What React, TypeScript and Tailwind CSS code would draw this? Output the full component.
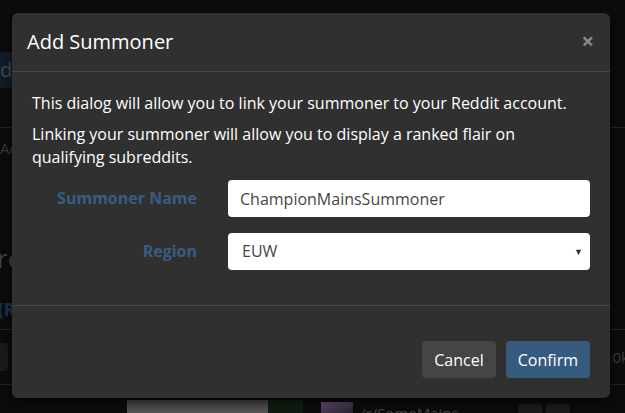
import React, { useState } from 'react'

const font = { fontFamily: '"Open Sans", "Liberation Sans", sans-serif' }

function Backdrop() {
  // the page behind the modal, already darkened by the overlay
  return (
    <div className="absolute inset-0 flex flex-col bg-[#0b0b0b] overflow-hidden">
      <div className="h-[52px] shrink-0" />
      <div className="flex h-[36px] shrink-0">
        <div className="w-[40px] bg-[#111c27] text-[#3a4a5a] text-[20px] leading-[36px]">d</div>
      </div>
      <div className="h-[40px] shrink-0 border-b border-[#222222]" />
      <div className="h-[40px] shrink-0 text-[15px] leading-[40px] text-[#3b3b3b]">Ac</div>
      <div className="h-[72px] shrink-0" />
      <div className="h-[36px] shrink-0 text-[26px] leading-[36px] text-[#3f3f3f] -ml-[3px]">re</div>
      <div className="h-[22px] shrink-0" />
      <div className="h-[32px] shrink-0 text-[17px] leading-[24px] font-bold text-[#1c3147] border-b border-[#222222] -ml-[2px]">(R</div>
      <div className="flex items-center justify-between h-[55px] shrink-0 border-b border-[#222222]">
        <div className="w-[8px] h-[28px] rounded-r bg-[#1a1a1a]" />
        <div className="text-[15px] text-[#3b3b3b] -mr-[4px]">0k</div>
      </div>
      <div className="flex h-[28px] shrink-0 pt-[15px]">
        <div className="w-[127px]" />
        <div className="w-[141px] bg-gradient-to-b from-[#3a3a3a] to-[#555555]" />
        <div className="w-[35px] bg-[#0f1a0f]" />
        <div className="w-[18px]" />
        <div className="w-[32px] mt-[2px] bg-gradient-to-br from-[#5a4a6a] to-[#2a2030]" />
        <div className="ml-[7px] pt-[3px] text-[15px] leading-[20px] text-[#444444]">/r/SomeMains</div>
        <div className="flex-1" />
        <div className="flex gap-[4px] mr-[55px] mt-[4px]">
          <div className="w-[24px] h-[20px] rounded bg-[#1a1a1a]" />
          <div className="w-[24px] h-[20px] rounded bg-[#1a1a1a]" />
        </div>
      </div>
    </div>
  )
}

export default function App() {
  const [name, setName] = useState('ChampionMainsSummoner')
  const [region, setRegion] = useState('EUW')

  return (
    <div className="relative w-[625px] h-[413px] overflow-hidden text-white" style={font}>
      <Backdrop />

      <div className="absolute left-[12px] top-[13px] w-[598px] rounded-[6px] bg-[#303030] shadow-[0_3px_9px_rgba(0,0,0,0.5)]">
        <div className="flex items-center justify-between px-[15px] py-[15px] border-b border-[#464646]">
          <h4 className="text-[20px] leading-[28px] text-white">Add Summoner</h4>
          <button className="text-[22px] leading-none font-bold text-[#8a8a8a] -mt-[4px] mr-[1px]">×</button>
        </div>

        <div className="px-[20px] pt-[20px] pb-[20px] border-b border-[#464646] text-[16px] leading-[23px]">
          <p className="mb-[8px]">This dialog will allow you to link your summoner to your Reddit account.</p>
          <p className="mb-[11px] pr-[20px]">Linking your summoner will allow you to display a ranked flair on qualifying subreddits.</p>

          <div className="flex items-center gap-[31px] mb-[16px]">
            <label className="w-[165px] text-right font-bold text-[#3a5c82]">Summoner Name</label>
            <input
              value={name}
              onChange={(e) => setName(e.target.value)}
              className="flex-1 h-[37px] rounded-[4px] bg-white px-[12px] text-[16px] text-[#464545] outline-none"
              style={font}
            />
          </div>
          <div className="flex items-center gap-[31px] mb-[15px]">
            <label className="w-[165px] text-right font-bold text-[#3a5c82]">Region</label>
            <div className="relative flex-1">
              <select
                value={region}
                onChange={(e) => setRegion(e.target.value)}
                className="w-full h-[37px] appearance-none rounded-[4px] bg-white px-[14px] text-[16px] text-[#464545] outline-none"
                style={font}
              >
                <option>EUW</option>
                <option>EUNE</option>
                <option>NA</option>
              </select>
              <span className="pointer-events-none absolute right-[7px] top-[14px] text-[9px] leading-none text-[#333333]">▼</span>
            </div>
          </div>
        </div>

        <div className="flex justify-end gap-[10px] px-[20px] pt-[35px] pb-[20px]">
          <button className="h-[37px] px-[12px] rounded-[4px] bg-[#454545] text-[16px] text-white">Cancel</button>
          <button className="h-[37px] px-[12px] rounded-[4px] bg-[#375a7f] text-[16px] text-white">Confirm</button>
        </div>
      </div>
    </div>
  )
}
